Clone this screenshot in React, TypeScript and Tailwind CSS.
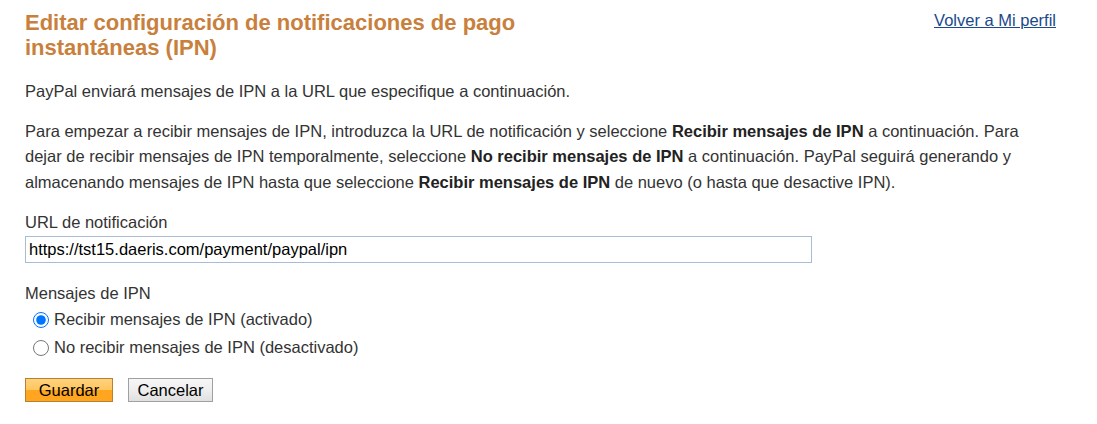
import { useState } from "react";

export default function App() {
    const [url, setUrl] = useState("https://tst15.daeris.com/payment/paypal/ipn")
    const [enabled, setEnabled] = useState(true)

    return <div className="w-[1097px] h-[424px] bg-white px-[25px] pt-[10px] text-[16.5px] leading-[25.5px] text-[#333] font-['Liberation_Sans',Arial,sans-serif]">
        <div className="flex justify-between items-start">
            <h1 className="w-[540px] text-[22px] leading-[25px] font-bold text-[#c8803c]">
                Editar configuración de notificaciones de pago instantáneas (IPN)
            </h1>
            <a href="#" className="mr-[16px] mt-[-1px] text-[16.5px] leading-[22px] text-[#1a4a8a] underline">Volver a Mi perfil</a>
        </div>

        <p className="mt-[19px]">PayPal enviará mensajes de IPN a la URL que especifique a continuación.</p>

        <p className="mt-[14px] w-[1030px]">
            Para empezar a recibir mensajes de IPN, introduzca la URL de notificación y seleccione <b className="text-[#222]">Recibir mensajes de IPN</b> a continuación. Para dejar de recibir mensajes de IPN temporalmente, seleccione <b className="text-[#222]">No recibir mensajes de IPN</b> a continuación. PayPal seguirá generando y almacenando mensajes de IPN hasta que seleccione <b className="text-[#222]">Recibir mensajes de IPN</b> de nuevo (o hasta que desactive IPN).
        </p>

        <label className="block mt-[15px]">URL de notificación</label>
        <input
            type="text"
            value={url}
            onChange={(e) => setUrl(e.target.value)}
            className="block w-[787px] h-[27px] px-[3px] border border-[#a9bcd6] text-[16.5px] text-black outline-none"
        />

        <div className="mt-[18px]">Mensajes de IPN</div>
        <div className="flex flex-col">
            <label className="flex items-center h-[28px] pl-[8px]">
                <input type="radio" name="ipn" checked={enabled} onChange={() => setEnabled(true)} className="w-4 h-4 m-0 mr-[5px] accent-[#0075ff]" />
                Recibir mensajes de IPN (activado)
            </label>
            <label className="flex items-center h-[28px] pl-[8px]">
                <input type="radio" name="ipn" checked={!enabled} onChange={() => setEnabled(false)} className="w-4 h-4 m-0 mr-[5px] accent-[#0075ff]" />
                No recibir mensajes de IPN (desactivado)
            </label>
        </div>

        <div className="flex gap-[15px] mt-[16px]">
            <button type="button" className="w-[88px] h-[24px] text-[16.5px] leading-none text-black border border-[#b5822f] bg-[linear-gradient(#ffd27c_0%,#ffc660_48%,#ffa51f_52%,#ffa51f_100%)]">Guardar</button>
            <button type="button" className="w-[85px] h-[24px] text-[16.5px] leading-none text-black border border-[#a0a0a0] bg-[linear-gradient(#f6f6f6_0%,#eeeeee_50%,#e0e0e0_100%)]">Cancelar</button>
        </div>
    </div>
}
